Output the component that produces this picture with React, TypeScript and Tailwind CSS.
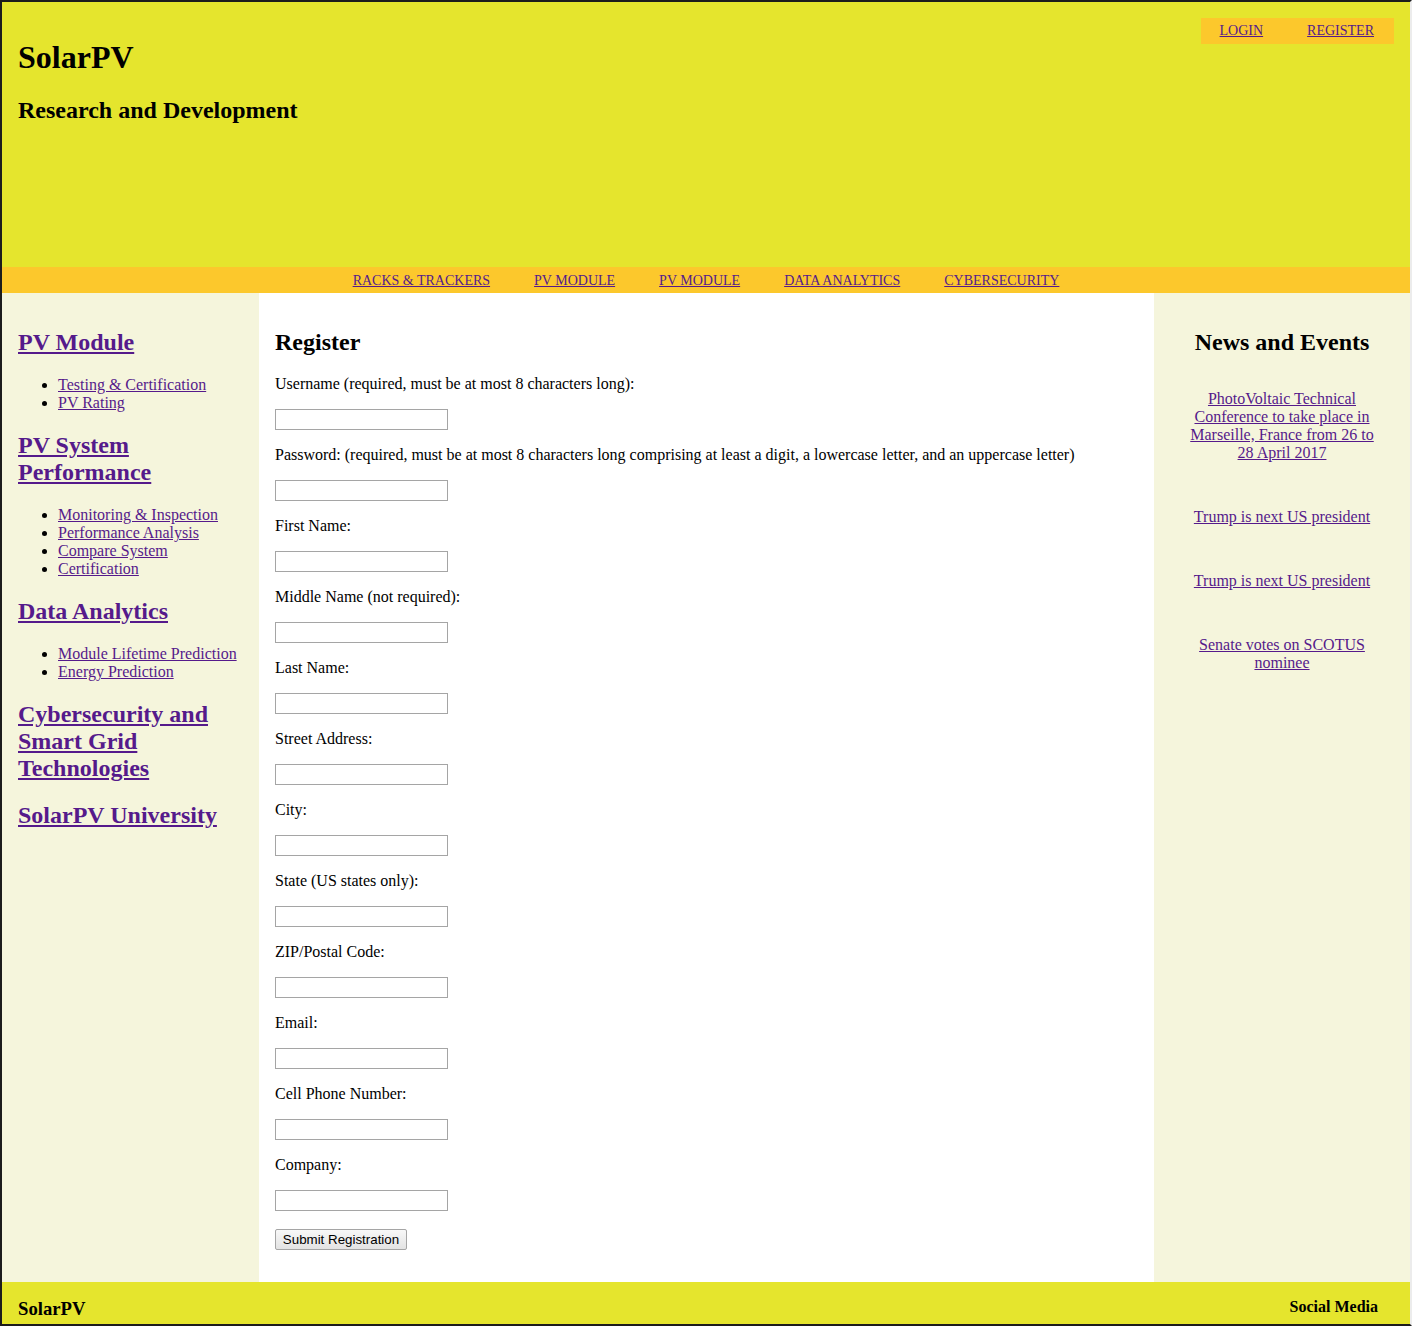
import React from 'react';

const linkCls = "text-[#551a8b] underline";

const SideSection: React.FC<{ title: string, items?: string[] }> = ({ title, items }) => (
    <div>
        <h2 className="text-[24px] font-bold my-[20px]">
            <a href="#" className={linkCls}>{title}</a>
        </h2>
        {items && (
            <ul className="list-disc pl-10 my-4">
                {items.map((it) => (
                    <li key={it} className="leading-[18px]">
                        <a href="#" className={linkCls}>{it}</a>
                    </li>
                ))}
            </ul>
        )}
    </div>
);

const fields = [
    "Username (required, must be at most 8 characters long):",
    "Password: (required, must be at most 8 characters long comprising at least a digit, a lowercase letter, and an uppercase letter)",
    "First Name:",
    "Middle Name (not required):",
    "Last Name:",
    "Street Address:",
    "City:",
    "State (US states only):",
    "ZIP/Postal Code:",
    "Email:",
    "Cell Phone Number:",
    "Company:",
];

const news = [
    "PhotoVoltaic Technical Conference to take place in Marseille, France from 26 to 28 April 2017",
    "Trump is next US president",
    "Trump is next US president",
    "Senate votes on SCOTUS nominee",
];

const navItems = ["RACKS & TRACKERS", "PV MODULE", "PV MODULE", "DATA ANALYTICS", "CYBERSECURITY"];

export default function App() {
    return (
        <div className="font-['Liberation_Serif',serif] text-[16px] leading-[normal] text-black border-t-2 border-l-2 border-b-2 border-[#1c1c1c] border-r-2 border-r-[#ececec]">
            {/* Header */}
            <header className="h-[265px] bg-[#e5e52d] p-4 flex justify-between items-start">
                <div>
                    <h1 className="text-[32px] font-bold mt-[21px] mb-[21px]">SolarPV</h1>
                    <h2 className="text-[24px] font-bold">Research and Development</h2>
                </div>
                <div className="h-[26px] bg-[#fcc82c] flex items-center pl-[19px] pr-[20px] gap-[44px] text-[14px]">
                    <a href="#" className={linkCls}>LOGIN</a>
                    <a href="#" className={linkCls}>REGISTER</a>
                </div>
            </header>

            {/* Nav */}
            <nav className="h-[26px] bg-[#fcc82c] flex items-center justify-center gap-[44px] text-[14px] pt-[1px]">
                {navItems.map((n, i) => (
                    <a key={i} href="#" className={linkCls}>{n}</a>
                ))}
            </nav>

            {/* Main */}
            <div className="flex">
                <aside className="w-[257px] bg-[#f5f5dc] px-4 pt-4 shrink-0">
                    <SideSection title="PV Module" items={["Testing & Certification", "PV Rating"]} />
                    <SideSection title="PV System Performance" items={["Monitoring & Inspection", "Performance Analysis", "Compare System", "Certification"]} />
                    <SideSection title="Data Analytics" items={["Module Lifetime Prediction", "Energy Prediction"]} />
                    <SideSection title="Cybersecurity and Smart Grid Technologies" />
                    <SideSection title="SolarPV University" />
                </aside>

                <main className="flex-1 bg-white px-4 pt-4 pb-8">
                    <h2 className="text-[24px] font-bold mt-[20px] mb-[19px]">Register</h2>
                    <form onSubmit={(e) => e.preventDefault()}>
                        {fields.map((f) => (
                            <div key={f}>
                                <p className="leading-[18px] my-4">{f}</p>
                                <input type="text" className="block w-[173px] h-[21px] border border-[#a5a5a5] bg-white px-[2px] text-[13px]" />
                            </div>
                        ))}
                        <button type="submit" className="mt-[18px] h-[21px] w-[132px] border border-[#a5a5a5] rounded-[2px] bg-gradient-to-b from-[#f8f8f8] to-[#e3e3e3] font-['Liberation_Sans',Arial,sans-serif] text-[13.33px] text-black">
                            Submit Registration
                        </button>
                    </form>
                </main>

                <aside className="w-[256px] bg-[#f5f5dc] px-8 pt-4 shrink-0 text-center">
                    <h2 className="text-[24px] font-bold mt-[20px] mb-[34px]">News and Events</h2>
                    <div className="flex flex-col gap-[46px]">
                        {news.map((n, i) => (
                            <p key={i} className="leading-[18px]">
                                <a href="#" className={linkCls}>{n}</a>
                            </p>
                        ))}
                    </div>
                </aside>
            </div>

            {/* Footer */}
            <footer className="h-[42px] bg-[#e5e52d] flex justify-between items-start pt-4 pl-4 pr-8">
                <h3 className="text-[18.72px] font-bold">SolarPV</h3>
                <p className="font-bold">Social Media</p>
            </footer>
        </div>
    );
}
